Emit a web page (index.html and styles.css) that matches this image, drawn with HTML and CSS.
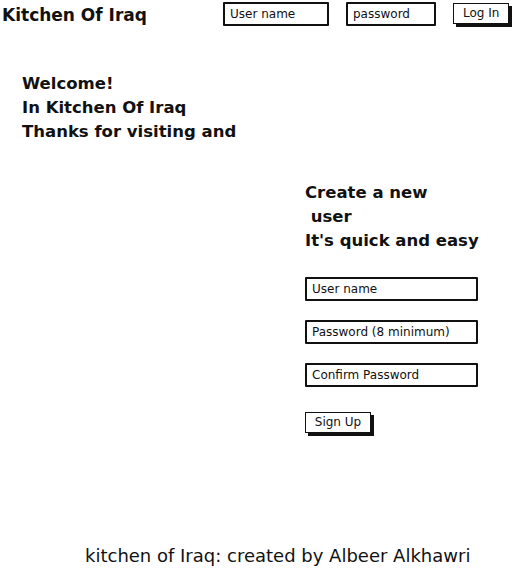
FILE: index.html
```html
<!DOCTYPE html>
<html lang="en">
<head>
    <meta charset="UTF-8">
    <meta name="viewport" content="width=device-width, initial-scale=1.0">
    <title>Kitchen Of Iraq</title>
    <link rel="stylesheet" href="styles.css">
</head>
<body>
    <header>
        <h1 class="logo">Kitchen Of Iraq</h1>
        <div class="login">
            <input type="text" class="field field-user" placeholder="User name">
            <input type="password" class="field field-pass" placeholder="password">
            <button class="sketch-button">Log In</button>
        </div>
    </header>

    <main>
        <div class="welcome">
            Welcome!<br>
            In Kitchen Of Iraq<br>
            Thanks for visiting and
        </div>

        <div class="signup">
            <h2 class="signup-title">Create a new<br>&nbsp;user<br>It's quick and easy</h2>
            <input type="text" class="field field-wide" placeholder="User name">
            <input type="password" class="field field-wide" placeholder="Password (8 minimum)">
            <input type="password" class="field field-wide" placeholder="Confirm Password">
            <button class="sketch-button signup-button">Sign Up</button>
        </div>
    </main>

    <footer>
        kitchen of Iraq: created by Albeer Alkhawri
    </footer>
</body>
</html>
```
FILE: styles.css
```css
body {
    font-family: "DejaVu Sans", Arial, sans-serif;
    margin: 0;
    padding: 0;
    background-color: #fff;
    color: #111;
    width: 531px;
    height: 570px;
    display: flex;
    flex-direction: column;
}

header {
    display: flex;
    align-items: flex-start;
    padding: 2px 0 0 2px;
    height: 28px;
    box-sizing: border-box;
}

.logo {
    font-size: 17px;
    font-weight: 700;
    margin: 2px 0 0 0;
    line-height: 22px;
    width: 221px;
}

.login {
    display: flex;
    align-items: flex-start;
}

.field {
    font-family: inherit;
    font-size: 12px;
    color: #111;
    height: 24px;
    box-sizing: border-box;
    border: 2px solid #111;
    border-radius: 1px;
    padding: 0 5px 1px 5px;
    background-color: #fff;
    outline: none;
}

.field::placeholder {
    color: #111;
    opacity: 1;
}

.field-user {
    width: 106px;
    margin-right: 17px;
}

.field-pass {
    width: 90px;
    margin-right: 17px;
}

.sketch-button {
    font-family: inherit;
    font-size: 12px;
    color: #111;
    background-color: #fff;
    border: 1.5px solid #111;
    border-radius: 0;
    box-shadow: 3px 3px 0 #111;
    height: 21px;
    padding: 0 9px 1px 9px;
    margin-top: 1px;
    white-space: nowrap;
    cursor: pointer;
}

main {
    display: flex;
    flex-direction: column;
}

.welcome {
    font-size: 16.5px;
    font-weight: 700;
    line-height: 24px;
    margin: 44px 0 0 22px;
}

.signup {
    display: flex;
    flex-direction: column;
    align-items: flex-start;
    margin: 37px 0 0 305px;
}

.signup-title {
    font-size: 16.5px;
    font-weight: 700;
    line-height: 24px;
    margin: 0 0 24px 0;
}

.field-wide {
    width: 173px;
    margin-bottom: 19px;
}

.signup-button {
    width: 66px;
    padding: 0 0 1px 0;
    margin-top: 6px;
}

footer {
    margin-top: auto;
    padding: 0 0 2px 85px;
    font-size: 18px;
    line-height: 24px;
}
```
